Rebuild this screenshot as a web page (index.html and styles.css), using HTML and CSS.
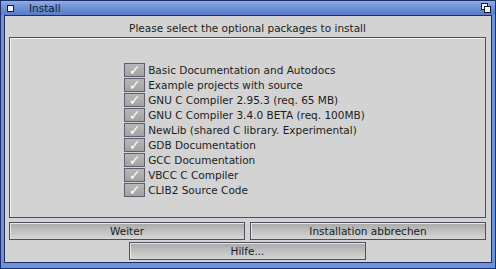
FILE: index.html
```html
<!DOCTYPE html>
<html>
<head>
    <title>Install</title>
    <link rel="stylesheet" href="styles.css">
</head>
<body>
    <div class="window">
        <div class="titlebar">
            <span class="close-gadget"></span>
            <span class="title">Install</span>
            <span class="depth-gadget">
                <span class="depth-back"></span>
                <span class="depth-front"></span>
            </span>
        </div>
        <div class="content">
            <div class="prompt">Please select the optional packages to install</div>
            <div class="group">
                <ul class="packages">
                    <li><span class="check">&#10003;</span>Basic Documentation and Autodocs</li>
                    <li><span class="check">&#10003;</span>Example projects with source</li>
                    <li><span class="check">&#10003;</span>GNU C Compiler 2.95.3 (req. 65 MB)</li>
                    <li><span class="check">&#10003;</span>GNU C Compiler 3.4.0 BETA (req. 100MB)</li>
                    <li><span class="check">&#10003;</span>NewLib (shared C library. Experimental)</li>
                    <li><span class="check">&#10003;</span>GDB Documentation</li>
                    <li><span class="check">&#10003;</span>GCC Documentation</li>
                    <li><span class="check">&#10003;</span>VBCC C Compiler</li>
                    <li><span class="check">&#10003;</span>CLIB2 Source Code</li>
                </ul>
            </div>
            <div class="button-row">
                <button class="btn">Weiter</button>
                <button class="btn">Installation abbrechen</button>
            </div>
            <div class="button-row center">
                <button class="btn">Hilfe...</button>
            </div>
        </div>
    </div>
</body>
</html>
```

FILE: styles.css
```css
:root {
    --frame-blue: #6f92d8;
    --frame-dark: #1d2f66;
    --panel-grey: #d3d3d3;
    --line-dark: #4e4e5e;
    --text: #1c1c1c;
}

body {
    margin: 0;
    font-family: 'DejaVu Sans', Verdana, sans-serif;
    font-size: 10.5px;
    color: var(--text);
}

.window {
    width: 496px;
    height: 269px;
    box-sizing: border-box;
    background: var(--frame-blue);
    border: 1px solid var(--frame-dark);
    display: flex;
    flex-direction: column;
}

.titlebar {
    height: 17px;
    display: flex;
    align-items: center;
    background: linear-gradient(#8eaeea 0%, #6f92d8 45%, #5a7bc8 100%);
    padding: 0 4px 0 6px;
}

.close-gadget {
    width: 5px;
    height: 5px;
    border: 1px solid #1a1a2e;
    background: #f4f6ff;
}

.title {
    margin-left: 15px;
    flex: 1;
    color: #15172a;
}

.depth-gadget {
    position: relative;
    width: 10px;
    height: 10px;
}

.depth-back,
.depth-front {
    position: absolute;
    width: 5px;
    height: 5px;
    border: 1px solid #1a1a2e;
    background: #f4f6ff;
}

.depth-back {
    left: 0;
    top: 0;
}

.depth-front {
    left: 3px;
    top: 3px;
}

.content {
    flex: 1;
    margin: 0 3px 5px 3px;
    background: var(--panel-grey);
    border: 1px solid var(--frame-dark);
    display: flex;
    flex-direction: column;
    padding: 0 5px 2px 4px;
}

.prompt {
    text-align: center;
    height: 18px;
    line-height: 18px;
    margin-top: 3px;
}

.group {
    height: 179px;
    border: 1px solid var(--line-dark);
    box-shadow: inset 1px 1px 0 #f2f2f2;
    display: flex;
    align-items: center;
    justify-content: center;
}

.packages {
    list-style: none;
    margin: 4px 0 0 -6px;
    padding: 0;
}

.packages li {
    display: flex;
    align-items: center;
    height: 15px;
}

.check {
    width: 19px;
    height: 12px;
    margin-right: 3px;
    border: 1px solid #5e5e6e;
    background: linear-gradient(#b8b8b8, #a2a2a2);
    color: #ffffff;
    font-size: 14px;
    font-weight: bold;
    line-height: 12px;
    text-align: center;
}

.button-row {
    display: flex;
    gap: 5px;
    margin-top: 4px;
}

.button-row.center {
    justify-content: center;
    margin-top: 2px;
}

.btn {
    flex: 1;
    height: 18px;
    padding: 0;
    border: 1px solid var(--line-dark);
    background: linear-gradient(#a8a8a8 0%, #bcbcbc 40%, #d6d6d6 100%);
    box-shadow: inset 1px 1px 0 #e8e8e8;
    font-family: 'DejaVu Sans', Verdana, sans-serif;
    font-size: 10.5px;
    color: var(--text);
}

.button-row.center .btn {
    flex: none;
    width: 237px;
}
```
